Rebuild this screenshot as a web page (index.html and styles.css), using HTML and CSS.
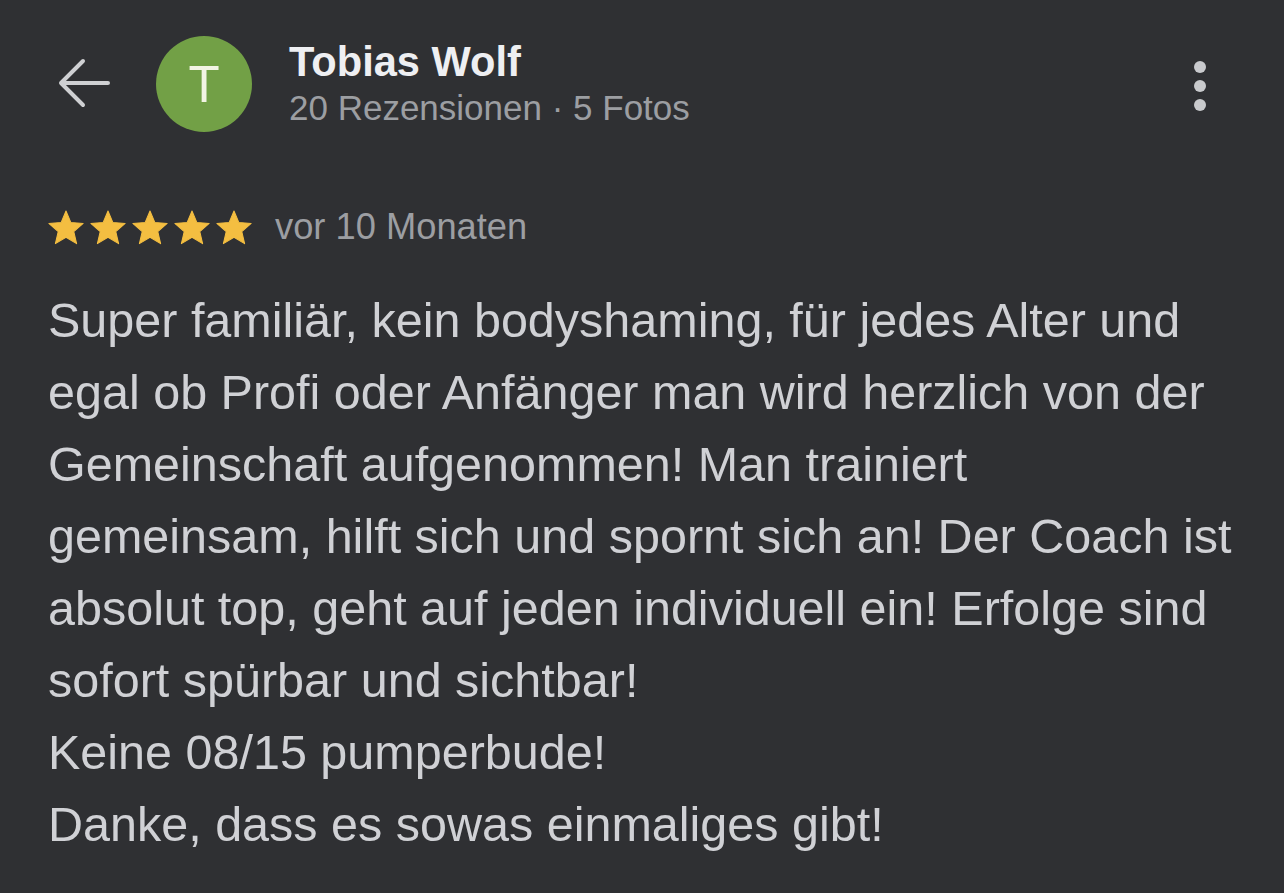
FILE: index.html
```html
<!DOCTYPE html>
<html lang="de">
<head>
    <meta charset="UTF-8">
    <meta name="viewport" content="width=device-width, initial-scale=1.0">
    <title>Rezension - Tobias Wolf</title>
    <link rel="stylesheet" href="styles.css">
</head>
<body>

    <div class="header">
        <div class="back">
            <svg width="52" height="52" viewBox="0 0 52 52">
                <path d="M50 25H3M25 3L3 25l22 22" fill="none" stroke="#cfd0d3" stroke-width="4" stroke-linecap="round" stroke-linejoin="round"/>
            </svg>
        </div>
        <div class="avatar">T</div>
        <div class="author">
            <div class="name">Tobias Wolf</div>
            <div class="meta">20 Rezensionen · 5 Fotos</div>
        </div>
        <div class="menu">
            <span class="dot"></span>
            <span class="dot"></span>
            <span class="dot"></span>
        </div>
    </div>

    <div class="review">
        <div class="rating">
            <div class="stars">
                <svg viewBox="1.5 1.5 21 20.2"><path d="M12 17.27L18.18 21l-1.64-7.03L22 9.24l-7.19-.61L12 2 9.19 8.63 2 9.24l5.46 4.73L5.82 21z"/></svg>
                <svg viewBox="1.5 1.5 21 20.2"><path d="M12 17.27L18.18 21l-1.64-7.03L22 9.24l-7.19-.61L12 2 9.19 8.63 2 9.24l5.46 4.73L5.82 21z"/></svg>
                <svg viewBox="1.5 1.5 21 20.2"><path d="M12 17.27L18.18 21l-1.64-7.03L22 9.24l-7.19-.61L12 2 9.19 8.63 2 9.24l5.46 4.73L5.82 21z"/></svg>
                <svg viewBox="1.5 1.5 21 20.2"><path d="M12 17.27L18.18 21l-1.64-7.03L22 9.24l-7.19-.61L12 2 9.19 8.63 2 9.24l5.46 4.73L5.82 21z"/></svg>
                <svg viewBox="1.5 1.5 21 20.2"><path d="M12 17.27L18.18 21l-1.64-7.03L22 9.24l-7.19-.61L12 2 9.19 8.63 2 9.24l5.46 4.73L5.82 21z"/></svg>
            </div>
            <span class="time">vor 10 Monaten</span>
        </div>

        <p class="text">Super familiär, kein bodyshaming, für jedes Alter und egal ob Profi oder Anfänger man wird herzlich von der Gemeinschaft aufgenommen! Man trainiert gemeinsam, hilft sich und spornt sich an! Der Coach ist absolut top, geht auf jeden individuell ein! Erfolge sind sofort spürbar und sichtbar!<br>Keine 08/15 pumperbude!<br>Danke, dass es sowas einmaliges gibt!</p>
    </div>

</body>
</html>
```

FILE: styles.css
```css
body {
    margin: 0;
    background-color: #2f3033;
    font-family: 'Liberation Sans', Arial, sans-serif;
    color: #d0d1d5;
}

.header {
    display: flex;
    align-items: center;
    padding: 36px 78px 0 58px;
}

.back {
    width: 52px;
    height: 52px;
    margin-right: 46px;
}

.back svg {
    display: block;
}

.avatar {
    width: 96px;
    height: 96px;
    border-radius: 50%;
    background-color: #72a046;
    color: #f2f4e4;
    font-size: 51px;
    display: flex;
    justify-content: center;
    align-items: center;
    flex-shrink: 0;
}

.author {
    margin-left: 37px;
    flex: 1;
}

.name {
    font-size: 41.6px;
    font-weight: bold;
    color: #eeeff2;
    line-height: 48px;
}

.meta {
    font-size: 35px;
    color: #9c9ea2;
    line-height: 44px;
}

.menu {
    display: flex;
    flex-direction: column;
    gap: 7px;
    align-self: flex-start;
    margin-top: 25px;
}

.dot {
    width: 12px;
    height: 12px;
    border-radius: 50%;
    background-color: #c9cacd;
}

.review {
    padding: 0 40px 0 48px;
}

.rating {
    display: flex;
    align-items: center;
    margin-top: 74px;
}

.stars {
    display: flex;
    gap: 6px;
}

.stars svg {
    width: 36px;
    height: 35px;
    fill: #f4be41;
    stroke: #f4be41;
    stroke-width: 0.6;
    stroke-linejoin: round;
}

.time {
    font-size: 36.3px;
    color: #9c9ea2;
    margin-left: 23px;
}

.text {
    margin: 36px 0 0;
    font-size: 48.5px;
    line-height: 72px;
}
```
